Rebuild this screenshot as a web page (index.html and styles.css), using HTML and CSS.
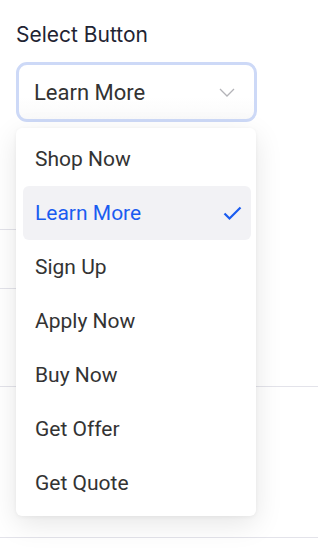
FILE: index.html
```html
<!DOCTYPE html>
<html>
<head>
<meta charset="utf-8">
<link rel="stylesheet" href="styles.css">
</head>
<body>
<div class="page">
  <div class="field">
    <div class="label">Select Button</div>
    <div class="select-wrap">
      <button class="trigger">
        <span class="trigger-text">Learn More</span>
        <svg class="chevron" width="16" height="9" viewBox="0 0 16 9"><path d="M1 1 L8 8 L15 1" fill="none" stroke="#b3b3b8" stroke-width="1.3"/></svg>
      </button>
      <ul class="menu">
        <li class="item">Shop Now</li>
        <li class="item selected">Learn More
          <svg class="check" width="19" height="15" viewBox="0 0 19 15"><path d="M1.5 7.5 L6.5 12.5 L17.5 1.5" fill="none" stroke="#1a5cf0" stroke-width="2.2"/></svg>
        </li>
        <li class="item">Sign Up</li>
        <li class="item">Apply Now</li>
        <li class="item">Buy Now</li>
        <li class="item">Get Offer</li>
        <li class="item">Get Quote</li>
      </ul>
    </div>
  </div>
  <div class="rows">
    <div class="row row-a"></div>
    <div class="row row-b"></div>
    <div class="row row-c"></div>
    <div class="row row-d"></div>
  </div>
</div>
</body>
</html>
```
FILE: styles.css
```css
* { box-sizing: border-box; }
html, body { margin: 0; padding: 0; background: #fff; }
.page { width: 318px; height: 550px; overflow: hidden; }
.field { padding: 22px 16px 0 16px; }
.label {
  font-family: Inter, "Noto Sans", sans-serif;
  font-size: 21px;
  line-height: 25px;
  color: #1f2433;
  margin-bottom: 15px;
}
.select-wrap { position: relative; width: 241px; }
.trigger {
  display: flex;
  align-items: center;
  justify-content: space-between;
  width: 241px;
  height: 60px;
  padding: 0 19px 0 15px;
  border: 3px solid #cdd9f7;
  border-radius: 11px;
  background: linear-gradient(#fff 60%, #fafafa);
  font-family: Roboto, "Liberation Sans", sans-serif;
  font-size: 22px;
  color: #333;
  cursor: pointer;
}
.chevron { display: block; }
.menu {
  position: absolute;
  left: 0;
  top: 66px;
  width: 240px;
  margin: 0;
  padding: 4px 5px 6px 7px;
  list-style: none;
  background: #fff;
  border-radius: 6px;
  box-shadow: 0 8px 28px rgba(0,0,0,0.10), 0 1px 4px rgba(0,0,0,0.05);
  z-index: 2;
}
.item {
  display: flex;
  align-items: center;
  justify-content: space-between;
  height: 54px;
  padding: 0 9px 0 12px;
  font-family: Roboto, "Liberation Sans", sans-serif;
  font-size: 21px;
  color: #333;
  border-radius: 6px;
}
.item.selected { background: #f2f2f5; color: #1a5cf0; }
.check { display: block; }
.rows { display: flex; flex-direction: column; }
.row { border-bottom: 1px solid #e3e3ea; }
.row-a { height: 108px; width: 200px; }
.row-b { height: 59px; width: 200px; }
.row-c { height: 98px; }
.row-d { height: 151px; }
```
